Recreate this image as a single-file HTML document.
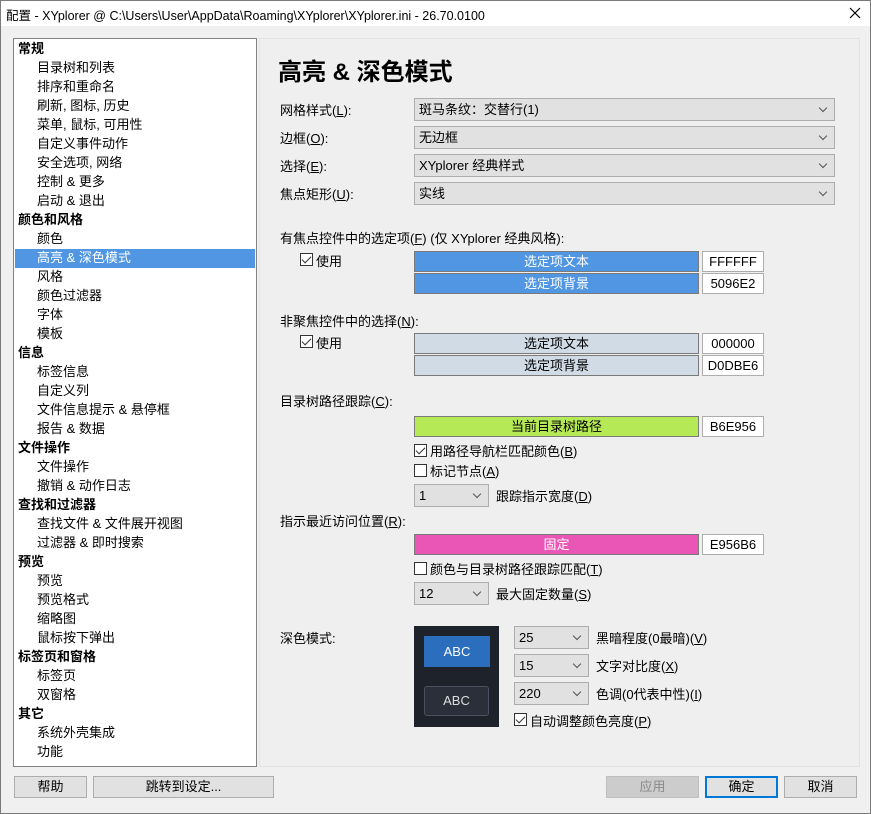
<!DOCTYPE html>
<html><head><meta charset="utf-8"><style>
*{box-sizing:border-box;margin:0;padding:0}
body{width:871px;height:814px;overflow:hidden;background:#f0f0f0;font-family:"Liberation Sans","Noto Sans CJK SC",sans-serif;font-size:13px;color:#000;position:relative}
.a{position:absolute;white-space:nowrap}
.frame{left:0;top:0;width:871px;height:814px;border:1px solid #7a7a7a}
.title{left:1px;top:1px;width:869px;height:25px;background:#fff}
.tree{left:13px;top:38px;width:244px;height:729px;background:#fff;border:1px solid #828282}
.tree div{position:absolute;height:19px;line-height:19px}
.sec{left:4px;font-weight:bold}
.it{left:23px}
.panel{left:259px;top:38px;width:601px;height:729px;border:1px solid #e3e3e3;background:#efefef}
.cb{background:#e1e1e1;border:1px solid #adadad;height:23px;line-height:21px;padding-left:4px}
.cb::after{content:"";position:absolute;right:8px;top:6px;width:5px;height:5px;border-right:1px solid #555;border-bottom:1px solid #555;transform:rotate(45deg)}
.btn{border:1px solid #7a7a7a;height:21px;line-height:19px;text-align:center}
.hex{background:#fff;border:1px solid #adadad;height:21px;line-height:19px;text-align:center;width:62px}
.ck{width:13px;height:13px;border:1px solid #333;background:#fff}
.ck.on::after{content:"";position:absolute;left:3px;top:0px;width:4px;height:8px;border-right:1.5px solid #333;border-bottom:1.5px solid #333;transform:rotate(45deg)}
.pb{border:1px solid #adadad;background:#e1e1e1;height:22px;line-height:20px;text-align:center}
u{text-decoration:underline}
</style></head><body>
<div class="a title"></div>
<div class="a frame"></div>
<div class="a" style="left:6px;top:5px;font-size:12.5px">配置 - XYplorer @ C:\Users\User\AppData\Roaming\XYplorer\XYplorer.ini - 26.70.0100</div>
<svg class="a" style="left:849px;top:7px" width="12" height="12"><path d="M1 1L11 11M11 1L1 11" stroke="#000" stroke-width="1.2"/></svg>

<div class="a tree">
<div class="sec" style="top:0px">常规</div>
<div class="it" style="top:19px">目录树和列表</div>
<div class="it" style="top:38px">排序和重命名</div>
<div class="it" style="top:57px">刷新, 图标, 历史</div>
<div class="it" style="top:76px">菜单, 鼠标, 可用性</div>
<div class="it" style="top:95px">自定义事件动作</div>
<div class="it" style="top:114px">安全选项, 网络</div>
<div class="it" style="top:133px">控制 &amp; 更多</div>
<div class="it" style="top:152px">启动 &amp; 退出</div>
<div class="sec" style="top:171px">颜色和风格</div>
<div class="it" style="top:190px">颜色</div>
<div style="top:210px;left:1px;width:240px;background:#5096e2"></div>
<div class="it" style="top:209px;color:#fff">高亮 &amp; 深色模式</div>
<div class="it" style="top:228px">风格</div>
<div class="it" style="top:247px">颜色过滤器</div>
<div class="it" style="top:266px">字体</div>
<div class="it" style="top:285px">模板</div>
<div class="sec" style="top:304px">信息</div>
<div class="it" style="top:323px">标签信息</div>
<div class="it" style="top:342px">自定义列</div>
<div class="it" style="top:361px">文件信息提示 &amp; 悬停框</div>
<div class="it" style="top:380px">报告 &amp; 数据</div>
<div class="sec" style="top:399px">文件操作</div>
<div class="it" style="top:418px">文件操作</div>
<div class="it" style="top:437px">撤销 &amp; 动作日志</div>
<div class="sec" style="top:456px">查找和过滤器</div>
<div class="it" style="top:475px">查找文件 &amp; 文件展开视图</div>
<div class="it" style="top:494px">过滤器 &amp; 即时搜索</div>
<div class="sec" style="top:513px">预览</div>
<div class="it" style="top:532px">预览</div>
<div class="it" style="top:551px">预览格式</div>
<div class="it" style="top:570px">缩略图</div>
<div class="it" style="top:589px">鼠标按下弹出</div>
<div class="sec" style="top:608px">标签页和窗格</div>
<div class="it" style="top:627px">标签页</div>
<div class="it" style="top:646px">双窗格</div>
<div class="sec" style="top:665px">其它</div>
<div class="it" style="top:684px">系统外壳集成</div>
<div class="it" style="top:703px">功能</div>
</div>

<div class="a panel"></div>
<div class="a" style="left:278px;top:52px;font-size:24px;font-weight:bold">高亮 &amp; 深色模式</div>

<div class="a" style="left:280px;top:100px">网格样式(<u>L</u>):</div>
<div class="a cb" style="left:414px;top:98px;width:421px">斑马条纹：交替行(1)</div>
<div class="a" style="left:280px;top:128px">边框(<u>O</u>):</div>
<div class="a cb" style="left:414px;top:126px;width:421px">无边框</div>
<div class="a" style="left:280px;top:156px">选择(<u>E</u>):</div>
<div class="a cb" style="left:414px;top:154px;width:421px">XYplorer 经典样式</div>
<div class="a" style="left:280px;top:184px">焦点矩形(<u>U</u>):</div>
<div class="a cb" style="left:414px;top:182px;width:421px">实线</div>

<div class="a" style="left:280px;top:228px">有焦点控件中的选定项(<u>F</u>) (仅 XYplorer 经典风格):</div>
<div class="a ck on" style="left:300px;top:253px"></div>
<div class="a" style="left:316px;top:251px">使用</div>
<div class="a btn" style="left:414px;top:251px;width:285px;background:#5096e2;color:#fff">选定项文本</div>
<div class="a hex" style="left:702px;top:251px">FFFFFF</div>
<div class="a btn" style="left:414px;top:273px;width:285px;background:#5096e2;color:#fff">选定项背景</div>
<div class="a hex" style="left:702px;top:273px">5096E2</div>

<div class="a" style="left:280px;top:311px">非聚焦控件中的选择(<u>N</u>):</div>
<div class="a ck on" style="left:300px;top:335px"></div>
<div class="a" style="left:316px;top:333px">使用</div>
<div class="a btn" style="left:414px;top:333px;width:285px;background:#d0dbe6">选定项文本</div>
<div class="a hex" style="left:702px;top:333px">000000</div>
<div class="a btn" style="left:414px;top:355px;width:285px;background:#d0dbe6">选定项背景</div>
<div class="a hex" style="left:702px;top:355px">D0DBE6</div>

<div class="a" style="left:280px;top:391px">目录树路径跟踪(<u>C</u>):</div>
<div class="a btn" style="left:414px;top:416px;width:285px;background:#b6e956">当前目录树路径</div>
<div class="a hex" style="left:702px;top:416px">B6E956</div>
<div class="a ck on" style="left:414px;top:444px"></div>
<div class="a" style="left:430px;top:441px">用路径导航栏匹配颜色(<u>B</u>)</div>
<div class="a ck" style="left:414px;top:464px"></div>
<div class="a" style="left:430px;top:461px">标记节点(<u>A</u>)</div>
<div class="a cb" style="left:414px;top:484px;width:75px">1</div>
<div class="a" style="left:496px;top:486px">跟踪指示宽度(<u>D</u>)</div>

<div class="a" style="left:280px;top:511px">指示最近访问位置(<u>R</u>):</div>
<div class="a btn" style="left:414px;top:534px;width:285px;background:#e956b6;color:#fff">固定</div>
<div class="a hex" style="left:702px;top:534px">E956B6</div>
<div class="a ck" style="left:414px;top:562px"></div>
<div class="a" style="left:430px;top:559px">颜色与目录树路径跟踪匹配(<u>T</u>)</div>
<div class="a cb" style="left:414px;top:582px;width:75px">12</div>
<div class="a" style="left:496px;top:584px">最大固定数量(<u>S</u>)</div>

<div class="a" style="left:280px;top:628px">深色模式:</div>
<div class="a" style="left:414px;top:626px;width:85px;height:101px;background:#1e222a"></div>
<div class="a" style="left:424px;top:636px;width:66px;height:31px;background:#2a6ebd;color:#fff;text-align:center;line-height:31px">ABC</div>
<div class="a" style="left:424px;top:686px;width:65px;height:30px;background:#2a2f3a;border:1px solid #4a5060;border-radius:3px;color:#ddd;text-align:center;line-height:28px">ABC</div>
<div class="a cb" style="left:514px;top:626px;width:75px">25</div>
<div class="a" style="left:596px;top:628px">黑暗程度(0最暗)(<u>V</u>)</div>
<div class="a cb" style="left:514px;top:654px;width:75px">15</div>
<div class="a" style="left:596px;top:656px">文字对比度(<u>X</u>)</div>
<div class="a cb" style="left:514px;top:682px;width:75px">220</div>
<div class="a" style="left:596px;top:684px">色调(0代表中性)(<u>I</u>)</div>
<div class="a ck on" style="left:514px;top:713px"></div>
<div class="a" style="left:530px;top:711px">自动调整颜色亮度(<u>P</u>)</div>

<div class="a pb" style="left:14px;top:776px;width:73px">帮助</div>
<div class="a pb" style="left:93px;top:776px;width:181px">跳转到设定...</div>
<div class="a pb" style="left:606px;top:776px;width:93px;background:#cccccc;border-color:#bfbfbf;color:#8a8a8a">应用</div>
<div class="a pb" style="left:705px;top:776px;width:73px;border:2px solid #0078d7;line-height:18px">确定</div>
<div class="a pb" style="left:784px;top:776px;width:73px">取消</div>
</body></html>
